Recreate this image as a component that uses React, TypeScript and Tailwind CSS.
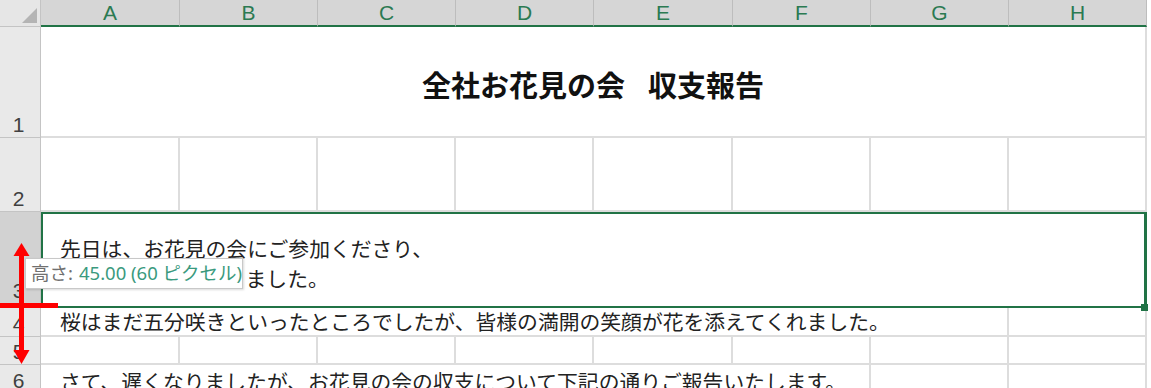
const COLS = ["A", "B", "C", "D", "E", "F", "G", "H"];
const WIDTHS = [139, 138, 138, 138, 139, 138, 138, 138];
const WCLS = ["w-[139px]", "w-[138px]", "w-[138px]", "w-[138px]", "w-[139px]", "w-[138px]", "w-[138px]", "w-[138px]"];

const body = "font-['Noto_Sans_CJK_JP','Noto_Sans',sans-serif]";

function RowHead({ n, selected = false }: { n: number; selected?: boolean }) {
  return (
    <div
      className={`flex w-[41px] shrink-0 items-end justify-center border-b border-r border-[#c4c4c4] pb-[2px] pr-[3px] font-['Liberation_Sans',sans-serif] text-[21px] leading-none text-[#404040] ${
        selected ? "bg-[#d2d2d2]" : "bg-[#e9e9e9]"
      }`}
    >
      {n}
    </div>
  );
}

function Cell({ i }: { i: number }) {
  return <div className={`${WCLS[i]} shrink-0 border-b-2 border-r-2 border-[#dddddd]`} />;
}

export default function App() {
  return (
    <div className="relative h-[388px] w-[1151px] overflow-hidden bg-white">
      {/* column headers */}
      <div className="flex h-[27px]">
        <div className="relative w-[41px] shrink-0 border-b border-r border-[#c4c4c4] bg-[#e6e6e6]">
          <div className="absolute bottom-[3px] right-[3px] h-0 w-0 border-b-[15px] border-l-[15px] border-b-[#b4b4b4] border-l-transparent" />
        </div>
        {COLS.map((c, i) => (
          <div
            key={c}
            className={`${WCLS[i]} flex shrink-0 items-center justify-center border-b-2 border-r border-b-[#217346] border-r-[#bdbdbd] bg-[#d6d6d6] font-['Liberation_Sans',sans-serif] text-[21px] leading-none text-[#2b7a52]`}
          >
            {c}
          </div>
        ))}
      </div>

      {/* row 1: title */}
      <div className="flex h-[111px]">
        <RowHead n={1} />
        <div className="flex w-[1106px] shrink-0 items-center justify-center border-b-2 border-r-2 border-[#dddddd] pt-[5px]">
          <h1 className={`${body} text-[29px] font-bold leading-none text-[#111]`}>
            全社お花見の会<span className="ml-[23px]">収支報告</span>
          </h1>
        </div>
      </div>

      {/* row 2 */}
      <div className="flex h-[74px]">
        <RowHead n={2} />
        {WIDTHS.map((_, i) => (
          <Cell key={i} i={i} />
        ))}
      </div>

      {/* row 3: selected */}
      <div className="flex h-[96px]">
        <div className="flex w-[41px] shrink-0 items-end justify-center border-b border-r border-[#c4c4c4] bg-[#d2d2d2] pb-[6px] pr-[3px] font-['Liberation_Sans',sans-serif] text-[21px] leading-none text-[#404040]">
          3
        </div>
        <div
          className={`relative flex w-[1106px] shrink-0 flex-col justify-center border-2 border-r-[3px] border-[#217346] pl-[17px] pt-[6px] ${body} text-[20.8px] leading-[30px] text-[#222]`}
        >
          <p className="whitespace-nowrap">先日は、お花見の会にご参加くださり、</p>
          <p className="whitespace-nowrap">
            <span className="tracking-[2.4px]">ありがとうござい</span>ました。
          </p>
          <div className="absolute -bottom-[5px] -right-[4px] h-[7px] w-[7px] bg-[#217346]" />
        </div>
      </div>

      {/* row 4 */}
      <div className="flex h-[29px]">
        <RowHead n={4} />
        <div
          className={`flex w-[968px] shrink-0 items-center border-b-2 border-r-2 border-[#dddddd] pl-[19px] ${body} text-[20.8px] leading-none text-[#222]`}
        >
          <span className="whitespace-nowrap">桜はまだ五分咲きといったところでしたが、皆様の満開の笑顔が花を添えてくれました。</span>
        </div>
        <Cell i={7} />
      </div>

      {/* row 5 */}
      <div className="flex h-[28px]">
        <RowHead n={5} />
        {WIDTHS.map((_, i) => (
          <Cell key={i} i={i} />
        ))}
      </div>

      {/* row 6 */}
      <div className="flex h-[29px]">
        <RowHead n={6} />
        <div
          className={`flex w-[830px] shrink-0 items-center border-b-2 border-r-2 border-[#dddddd] pl-[19px] pt-[5px] ${body} text-[20.8px] leading-none text-[#222]`}
        >
          <span className="whitespace-nowrap">さて、遅くなりましたが、お花見の会の収支について下記の通りご報告いたします。</span>
        </div>
        <Cell i={6} />
        <Cell i={7} />
      </div>

      {/* red resize marker */}
      <svg className="absolute left-0 top-[240px]" width="60" height="130" viewBox="0 0 60 130">
        <rect x="19" y="12" width="5" height="100" fill="#ff0000" />
        <polygon points="21.5,3 13.5,16 29.5,16" fill="#ff0000" />
        <polygon points="21.5,124 13.5,110 29.5,110" fill="#ff0000" />
        <rect x="0" y="63" width="58" height="5" fill="#ff0000" />
      </svg>

      {/* height tooltip */}
      <div className="absolute left-[25px] top-[258px] flex h-[31px] w-[218px] items-center border border-[#c8c8c8] bg-white pl-[5px] font-['Noto_Sans','Noto_Sans_CJK_JP',sans-serif] text-[18.5px] leading-none shadow-[1px_1px_2px_rgba(0,0,0,0.15)]">
        <span className="whitespace-nowrap text-[#707070]">高さ:</span>
        <span className="ml-[6px] whitespace-nowrap text-[#3a9a7e]">45.00 (60 ピクセル)</span>
      </div>
    </div>
  );
}
